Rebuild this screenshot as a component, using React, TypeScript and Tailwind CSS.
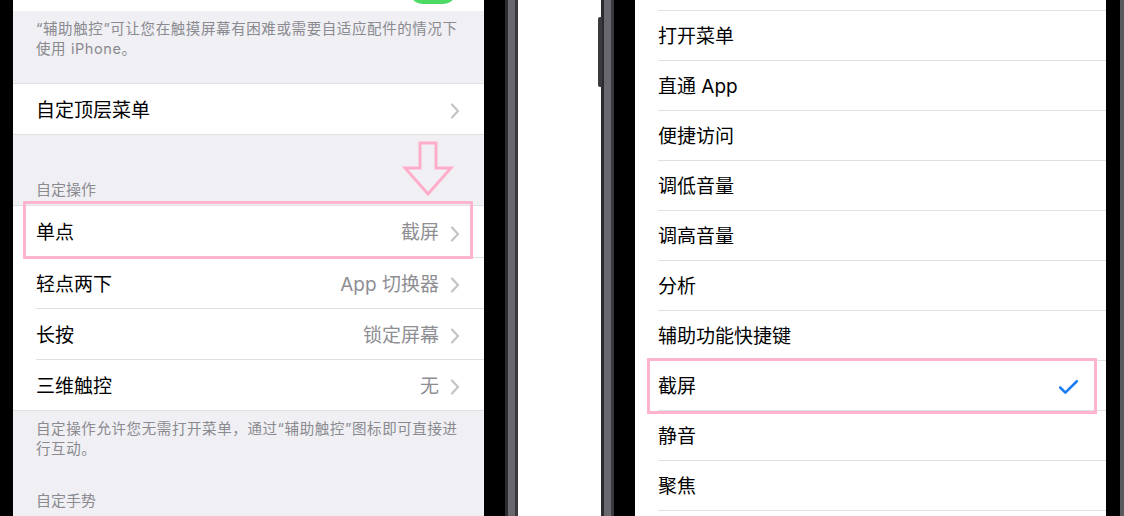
import { Check } from "lucide-react";

const font = { fontFamily: 'Inter, "Noto Sans CJK SC", sans-serif' };

const actions = [
  { label: "单点", value: "截屏" },
  { label: "轻点两下", value: "App 切换器" },
  { label: "长按", value: "锁定屏幕" },
  { label: "三维触控", value: "无" },
];

const options = ["打开菜单", "直通 App", "便捷访问", "调低音量", "调高音量", "分析", "辅助功能快捷键", "截屏", "静音", "聚焦"];

function Chevron() {
  return (
    <svg width="10" height="16" viewBox="0 0 10 16" className="ml-[11px]">
      <path d="M2 1.5 L8 8 L2 14.5" fill="none" stroke="#c4c4c8" strokeWidth="2.2" strokeLinecap="round" strokeLinejoin="round" />
    </svg>
  );
}

function DownArrow() {
  return (
    <svg width="52" height="56" viewBox="0 0 52 56" className="absolute left-[389px] top-[141px]">
      <path
        d="M18 2 H34 V27 H49 L26 53 L3 27 H18 Z"
        fill="none"
        stroke="#ffaccb"
        strokeWidth="3"
        strokeLinejoin="miter"
      />
    </svg>
  );
}

function LeftScreen() {
  return (
    <div className="relative h-[516px] w-[471px] shrink-0 overflow-hidden bg-[#efeff4]">
      <div className="flex h-[11px] items-end justify-end overflow-hidden bg-white pb-[7px] pr-[26px]">
        <div className="relative h-[31px] w-[50px] shrink-0 rounded-full bg-[#4cd964]" />
      </div>
      <p className="px-[23px] pt-[8px] text-[14.5px] leading-[19.5px] tracking-[0.6px] text-[#8a8a8f]">
        “辅助触控”可让您在触摸屏幕有困难或需要自适应配件的情况下
        <br />
        使用 iPhone。
      </p>
      <div className="mt-[25px] flex h-[52px] items-center border-y border-[#e0e0e4] bg-white pl-[23px] pr-[24px] pt-[4px]">
        <span className="flex-1 text-[19px] text-black">自定顶层菜单</span>
        <Chevron />
      </div>
      <p className="px-[23px] pt-[45px] pb-[5px] text-[15px] leading-[20px] text-[#8a8a8f]">自定操作</p>
      <div className="border-y border-[#e0e0e4] bg-white pl-[23px]">
        {actions.map((a, i) => (
          <div
            key={a.label}
            className={`flex h-[51px] items-center pr-[24px] pt-[4px] ${i > 0 ? "border-t border-[#e0e0e4]" : ""}`}
          >
            <span className="flex-1 text-[19px] text-black">{a.label}</span>
            <span className="text-[19px] text-[#8e8e93]">{a.value}</span>
            <Chevron />
          </div>
        ))}
      </div>
      <p className="px-[23px] pt-[8px] text-[14.5px] leading-[19.5px] tracking-[0.6px] text-[#8a8a8f]">
        自定操作允许您无需打开菜单，通过“辅助触控”图标即可直接进
        <br />
        行互动。
      </p>
      <p className="px-[23px] pt-[33px] text-[15px] leading-[20px] text-[#8a8a8f]">自定手势</p>

      <div className="absolute left-[10px] top-[201px] h-[58px] w-[450px] border-[3px] border-[#ffb3cf]" />
      <DownArrow />
    </div>
  );
}

function RightScreen() {
  return (
    <div className="relative h-[516px] w-[471px] shrink-0 overflow-hidden bg-white">
      <div className="h-[10px]" />
      {options.map((o) => (
        <div key={o} className="pl-[23px]">
          <div className="flex h-[50px] items-center border-t border-[#e0e0e4] pr-[25px] pt-[4px]">
            <span className="flex-1 text-[19px] text-black">{o}</span>
            {o === "截屏" && <Check className="h-[25px] w-[25px] text-[#1a7cf5]" strokeWidth={2.4} />}
          </div>
        </div>
      ))}
      <div className="ml-[23px] border-t border-[#e0e0e4]" />
      <div className="absolute left-[12px] top-[358px] h-[56px] w-[450px] border-[3px] border-[#ffb3cf]" />
    </div>
  );
}

function Band() {
  return (
    <div className="flex h-[516px] w-[13px] shrink-0">
      <div className="w-[3px] bg-[#2c2c30]" />
      <div className="w-[7px] bg-[#68686e]" />
      <div className="w-[3px] bg-[#3a3a3e]" />
    </div>
  );
}

export default function App() {
  return (
    <div className="flex h-[516px] w-[1124px] overflow-hidden bg-white" style={font}>
      <div className="w-[13px] shrink-0 bg-black" />
      <LeftScreen />
      <div className="w-[21px] shrink-0 bg-black" />
      <Band />
      <div className="w-[83px] shrink-0 bg-white" />
      <div className="relative">
        <div className="absolute left-[-3px] top-[17px] h-[70px] w-[4px] rounded-l-[2px] bg-[#3a3a3e]" />
        <Band />
      </div>
      <div className="w-[21px] shrink-0 bg-black" />
      <RightScreen />
      <div className="w-[14px] shrink-0 bg-black" />
      <div className="w-[4px] shrink-0 bg-[#5a5a5e]" />
    </div>
  );
}
